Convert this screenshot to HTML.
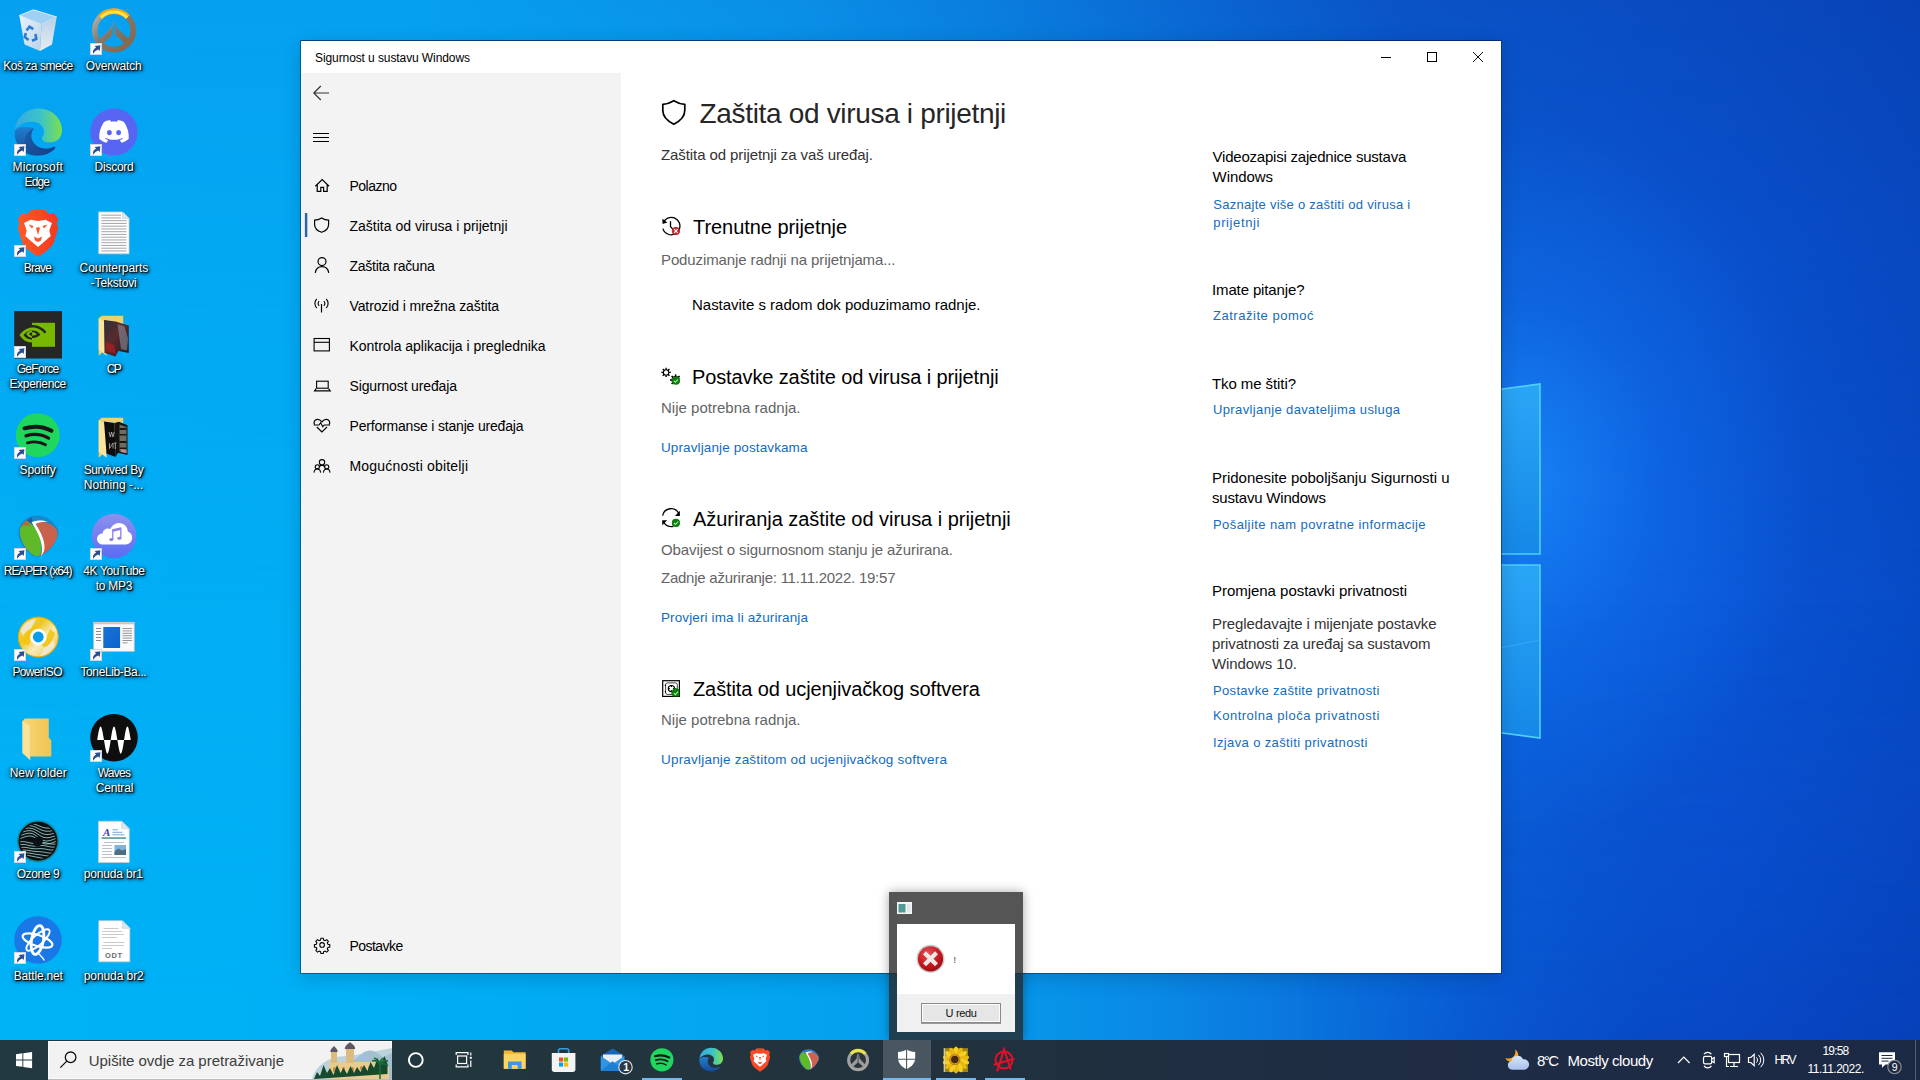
<!DOCTYPE html>
<html lang="hr">
<head>
<meta charset="utf-8">
<title>Sigurnost u sustavu Windows</title>
<style>
*{box-sizing:border-box;margin:0;padding:0}
html,body{width:1920px;height:1080px;overflow:hidden}
body{font-family:"Liberation Sans",sans-serif;position:relative;background:#0a5fd0;color:#000}
.abs{position:absolute}
svg{position:absolute;overflow:visible}
#wall{position:absolute;left:0;top:0;width:1920px;height:1080px;
 background:linear-gradient(90deg,#00b2f6 0,#00aff5 400px,#04a3f0 800px,#0698eb 1000px,#0a8ae5 1150px,#0a73dd 1320px,#0a60dc 1500px,#0a57da 1720px,#084dca 1920px)}
#wall2{position:absolute;left:0;top:0;width:1920px;height:1080px;
 background:linear-gradient(90deg,#06a0f1 0,#06a0f0 400px,#0a8ee6 800px,#0a7cdd 1000px,#0a66d2 1200px,#0a53c6 1400px,#0a4dc3 1600px,#0843b6 1920px);
 -webkit-mask-image:linear-gradient(180deg,#000 0,rgba(0,0,0,.5) 250px,rgba(0,0,0,.18) 600px,transparent 1000px);mask-image:linear-gradient(180deg,#000 0,rgba(0,0,0,.5) 250px,rgba(0,0,0,.18) 600px,transparent 1000px)}
#wall3{position:absolute;left:1000px;top:600px;width:920px;height:480px;background:linear-gradient(0deg,rgba(4,30,140,.3) 0,rgba(4,30,140,.16) 160px,rgba(4,30,140,0) 480px);-webkit-mask-image:linear-gradient(90deg,transparent 0,transparent 300px,#000 640px);mask-image:linear-gradient(90deg,transparent 0,transparent 300px,#000 640px)}
#glow{position:absolute;left:0;top:0;width:1920px;height:1080px;
 background:radial-gradient(ellipse 300px 360px at 1515px 480px, rgba(26,140,255,.8), rgba(24,130,255,.3) 50%, rgba(24,130,255,0) 100%)}
/* window */
#win{position:absolute;left:301px;top:41px;width:1200px;height:932px;background:#fff;
 box-shadow:0 0 0 1px rgba(0,40,90,.55),0 -1px 0 0 rgba(0,30,70,.5),0 4px 18px rgba(0,0,0,.18)}
#side{position:absolute;left:301px;top:73px;width:320px;height:900px;background:#f3f3f3}
.t{position:absolute;white-space:nowrap;line-height:1.2}
.lb{text-shadow:1px 1px 1px rgba(0,0,0,.95),1px 1px 3px rgba(0,0,0,.9),0 1px 4px rgba(0,0,0,.65),0 0 5px rgba(0,0,0,.35)}
/* desktop icons */
.ic{position:absolute;width:76px;text-align:center;color:#fff;font-size:12px;line-height:15px;
 text-shadow:1px 1px 1px rgba(0,0,0,.95),0 1px 3px rgba(0,0,0,.8),0 0 4px rgba(0,0,0,.55)}
.ic svg{left:14px;top:0}
.ic svg text{text-shadow:none}
/* taskbar */
#tb{position:absolute;left:0;top:1040px;width:1920px;height:40px;
 background:linear-gradient(90deg,#22383f 0,#22363e 500px,#23333d 800px,#21303e 1050px,#202e42 1200px,#1f2c44 1440px,#1c2945 1920px)}
</style>
</head>
<body>
<div id="wall"></div>
<div id="wall2"></div>
<div id="wall3"></div>
<div id="glow"></div>
<svg style="left:0;top:0" width="1920" height="1080" viewBox="0 0 1920 1080">
 <defs><linearGradient id="pn" x1="0" y1="0" x2="0" y2="1"><stop offset="0" stop-color="#2aa6f6"/><stop offset="1" stop-color="#1688e8"/></linearGradient></defs>
 <path d="M1480 392L1540 384V554H1480z" fill="url(#pn)"/>
 <path d="M1480 565H1540V738L1480 730z" fill="url(#pn)"/>
 <path d="M1480 392L1540 384V554H1480" fill="none" stroke="#4fd0f6" stroke-width="1.600"/>
 <path d="M1480 565H1540V738L1480 730" fill="none" stroke="#4fd0f6" stroke-width="1.600"/>
 <path d="M1480 652L1540 640" stroke="#3fb4f4" stroke-width="1" opacity=".6"/>
</svg>
<!-- DESKTOP ICONS -->
<div class="ic" style="left:0px;top:7px"><svg width="48" height="48" viewBox="0 0 48 48"><defs><linearGradient id="bl" x1="0" y1="0" x2="1" y2="1"><stop offset="0" stop-color="#e9f2fb"/><stop offset="1" stop-color="#bcd3e8"/></linearGradient><linearGradient id="br" x1="0" y1="0" x2="0" y2="1"><stop offset="0" stop-color="#b9d0e6"/><stop offset="1" stop-color="#e6edf4"/></linearGradient></defs>
<path d="M5.300 8.500L19.500 2.800 42.700 10 27.500 17.500z" fill="#9fd0f3" stroke="#d9ecfa" stroke-width="1"/>
<path d="M5.300 8.500L27.500 17.500 26 44 10.500 37.500z" fill="url(#bl)"/>
<path d="M27.500 17.500L42.700 10 38 37.500 26 44z" fill="url(#br)"/>
<g fill="none" stroke="#2b7ad1" stroke-width="2.600"><path d="M12.500 23.500l3-3.800 3.800 2.500"/><path d="M21.500 27l.8 5-4.300 1.700"/><path d="M14.500 33l-3.700-3 1-4"/></g></svg></div>
<div class="ic" style="left:76px;top:7px"><svg width="48" height="48" viewBox="0 0 48 48"><defs><linearGradient id="owg" x1="0" y1="0" x2="1" y2="1"><stop offset="0" stop-color="#b9b9b2"/><stop offset=".45" stop-color="#7f786c"/><stop offset="1" stop-color="#8a6547"/></linearGradient></defs>
<circle cx="24" cy="23.400" r="19.200" fill="none" stroke="url(#owg)" stroke-width="5.600"/>
<path d="M10.200 10A19.200 19.200 0 0 1 37.800 10" fill="none" stroke="#f0a81c" stroke-width="5.600"/>
<path d="M10.800 10.600A18.600 18.600 0 0 1 37.200 10.600" fill="none" stroke="#fbe444" stroke-width="3"/>
<path d="M22.800 11.300C22.600 17 21.500 20.500 18.500 23.500L9.300 32l3.400 5.300L22.800 27.500zM25.200 11.300C25.400 17 26.500 20.500 29.500 23.500L38.700 32l-3.400 5.300L25.200 27.500z" fill="url(#owg)"/><g transform="translate(0 36)"><rect x="0" y="0" width="12" height="12" fill="#fdfdfe"/><rect x=".5" y=".5" width="11" height="11" fill="none" stroke="#cfd6e2" stroke-width="1"/><path d="M3.200 10.800c-.8-2.800.4-5 2.900-6.300L4.600 3l5.800-.7-.7 5.800-1.500-1.500c-2 .7-3.500 2.200-5 4.200z" fill="#2a4f94"/></g></svg></div>
<div class="ic" style="left:0px;top:108px"><svg width="48" height="48" viewBox="0 0 48 48"><defs><linearGradient id="eg1" x1="0" y1="0" x2="1" y2="0"><stop offset="0" stop-color="#35a9e4"/><stop offset=".55" stop-color="#3cc3c8"/><stop offset="1" stop-color="#7ee04a"/></linearGradient><linearGradient id="eg2" x1="0" y1="0" x2="0" y2="1"><stop offset="0" stop-color="#1f7fd0"/><stop offset="1" stop-color="#154a96"/></linearGradient><linearGradient id="eg3" x1="0" y1="0" x2="1" y2="1"><stop offset="0" stop-color="#1a5fae"/><stop offset="1" stop-color="#153f86"/></linearGradient></defs>
<path d="M.8 22.500C2 9.500 12 .5 24.500.5 38 .5 48 10.500 48 22c0 8.500-6 12.500-12.500 12.500-5 0-7.500-2.200-7.500-4.300 0-2.200 2.200-2.700 2.200-6.200 0-5.200-5-10.200-12.200-10.200C9.500 13.800 2 19 .8 22.500z" fill="url(#eg1)"/>
<path d="M.8 22.500C-.5 32 5 42 14 46c9 3.500 20 1.500 26.500-5 1.500-1.800.6-3-1.200-2-5.500 3-13.300 2.500-18.300-2.500-4.800-4.800-4.800-11.500-1-16C13 18 5 18.500.8 22.500z" fill="url(#eg2)"/>
<path d="M20 20.500c-4 4.500-3.800 11.200 1 16 5 5 12.800 5.500 18.300 2.500 1.800-1 2.700.2 1.200 2-5 5-13.500 7.300-21 5.500C11.500 44 9 37 11 30c1.300-4.500 4.800-8.200 9-9.500z" fill="url(#eg3)"/><g transform="translate(0 36)"><rect x="0" y="0" width="12" height="12" fill="#fdfdfe"/><rect x=".5" y=".5" width="11" height="11" fill="none" stroke="#cfd6e2" stroke-width="1"/><path d="M3.200 10.800c-.8-2.800.4-5 2.900-6.300L4.600 3l5.800-.7-.7 5.800-1.500-1.500c-2 .7-3.500 2.200-5 4.200z" fill="#2a4f94"/></g></svg></div>
<div class="ic" style="left:76px;top:108px"><svg width="48" height="48" viewBox="0 0 48 48"><circle cx="24" cy="24" r="23.600" fill="#5865f2"/>
<path d="M14 14c3-1.400 5-1.700 6.300-1.700l.7 1.400c2-.3 4-.3 6 0l.7-1.400c1.300 0 3.300.3 6.300 1.700 3.500 5 5.300 11 4.700 17-2.200 2-5.200 3.300-7.200 3.800l-1.700-2.800c1.200-.4 2.200-.9 3.200-1.600l-.6-.5c-5.400 2.500-11.400 2.500-16.800 0l-.6.500c1 .7 2 1.200 3.200 1.600l-1.700 2.800c-2-.5-5-1.800-7.200-3.800-.6-6 1.200-12 4.700-17z" fill="#fff"/>
<ellipse cx="19.400" cy="24.600" rx="2.400" ry="2.700" fill="#5865f2"/><ellipse cx="28.600" cy="24.600" rx="2.400" ry="2.700" fill="#5865f2"/><g transform="translate(0 36)"><rect x="0" y="0" width="12" height="12" fill="#fdfdfe"/><rect x=".5" y=".5" width="11" height="11" fill="none" stroke="#cfd6e2" stroke-width="1"/><path d="M3.200 10.800c-.8-2.800.4-5 2.900-6.300L4.600 3l5.800-.7-.7 5.800-1.500-1.500c-2 .7-3.500 2.200-5 4.200z" fill="#2a4f94"/></g></svg></div>
<div class="ic" style="left:0px;top:209px"><svg width="48" height="48" viewBox="0 0 48 48"><defs><linearGradient id="brg" x1="0" y1="0" x2="1" y2="0"><stop offset="0" stop-color="#ff5a26"/><stop offset="1" stop-color="#f4381f"/></linearGradient></defs>
<path d="M24 .8l7.200.4 3.800 4 5-.8 4.200 5.600-1.600 4 1.600 5L40 33c-2 5-7 9-16 14.800C15 42 10 38 8 33L3.800 19l1.600-5-1.600-4L8 4.400l5 .8 3.800-4z" fill="url(#brg)"/>
<path d="M10 14l6.500-3.300L24 12l7.500-1.300L38 14l-2.700 7.500 1.400 5.500-6.200 5.500L24 38l-6.500-5.500-6.200-5.500 1.400-5.500z" fill="#fff"/>
<path d="M14.500 15.500l5 1.500-1.500 2.500zM33.500 15.500l-5 1.500 1.500 2.500zM20 27.500l4 2 4-2-1 4-3 1.500-3-1.500zM22 19l2 7 2-7-2-1z" fill="#fb542b"/><g transform="translate(0 36)"><rect x="0" y="0" width="12" height="12" fill="#fdfdfe"/><rect x=".5" y=".5" width="11" height="11" fill="none" stroke="#cfd6e2" stroke-width="1"/><path d="M3.200 10.800c-.8-2.800.4-5 2.900-6.300L4.600 3l5.800-.7-.7 5.800-1.500-1.500c-2 .7-3.500 2.200-5 4.200z" fill="#2a4f94"/></g></svg></div>
<div class="ic" style="left:76px;top:209px"><svg width="48" height="48" viewBox="0 0 48 48"><path d="M8.7 3H32.5L39 9.5V44.8H8.7z" fill="#fff" stroke="#c9cfd6" stroke-width=".8"/>
<path d="M32.5 3V9.5H39z" fill="#dfe7f2" stroke="#c9cfd6" stroke-width=".7"/><path d="M11.300 6.20H31" stroke="#9a9aa0" stroke-width=".9"/><path d="M11.300 8.95H31" stroke="#9a9aa0" stroke-width=".9"/><path d="M11.300 11.70H36.5" stroke="#9a9aa0" stroke-width=".9"/><path d="M11.300 14.45H36.5" stroke="#9a9aa0" stroke-width=".9"/><path d="M11.300 17.20H36.5" stroke="#9a9aa0" stroke-width=".9"/><path d="M11.300 19.95H36.5" stroke="#9a9aa0" stroke-width=".9"/><path d="M11.300 22.70H36.5" stroke="#9a9aa0" stroke-width=".9"/><path d="M11.300 25.45H36.5" stroke="#9a9aa0" stroke-width=".9"/><path d="M11.300 28.20H36.5" stroke="#9a9aa0" stroke-width=".9"/><path d="M11.300 30.95H36.5" stroke="#9a9aa0" stroke-width=".9"/><path d="M11.300 33.70H36.5" stroke="#9a9aa0" stroke-width=".9"/><path d="M11.300 36.45H36.5" stroke="#9a9aa0" stroke-width=".9"/><path d="M11.300 39.20H36.5" stroke="#9a9aa0" stroke-width=".9"/><path d="M11.300 41.95H36.5" stroke="#9a9aa0" stroke-width=".9"/></svg></div>
<div class="ic" style="left:0px;top:310px"><svg width="48" height="48" viewBox="0 0 48 48"><rect x=".2" y="1" width="47.800" height="47.500" fill="#262626"/>
<rect x="18" y="12.800" width="23" height="24" fill="#77b900"/>
<path d="M18 17.500c-6 .5-10 4-12.500 7.500 2.500 4.500 7 7.500 12.500 7.500 4.500 0 9-2 12.500-5l-2.500-1.800c-3 2.500-6 4-10 4-3.500 0-6.500-1.800-8.500-4.700 2-2.500 5-4.500 8.500-4.800z" fill="#77b900"/>
<path d="M18 20.500c3.500-.2 6.500 1.500 8.500 4-2 2.300-5 3.800-8.500 3.600v-2.500c2 .1 3.500-.4 4.800-1.400-1.300-1.300-2.800-2-4.800-1.800z" fill="#262626"/>
<path d="M18 20.300c-2.500.3-4.500 1.700-5.800 3.700 1.300 2.200 3.300 3.600 5.800 3.800v-2c-1.300-.2-2.300-.9-3-1.900.7-1 1.700-1.500 3-1.700z" fill="#77b900"/>
<path d="M18 15c5.500-.3 11 2.500 14.500 7l-2 1.600c-3-3.800-7.500-6.300-12.500-6z" fill="#262626"/><g transform="translate(0 36)"><rect x="0" y="0" width="12" height="12" fill="#fdfdfe"/><rect x=".5" y=".5" width="11" height="11" fill="none" stroke="#cfd6e2" stroke-width="1"/><path d="M3.200 10.800c-.8-2.800.4-5 2.900-6.300L4.600 3l5.800-.7-.7 5.800-1.500-1.500c-2 .7-3.500 2.200-5 4.200z" fill="#2a4f94"/></g></svg></div>
<div class="ic" style="left:76px;top:310px"><svg width="48" height="48" viewBox="0 0 48 48"><defs><linearGradient id="cpg" x1="0" y1="0" x2="1" y2="1"><stop offset="0" stop-color="#2b2f3a"/><stop offset=".45" stop-color="#5a2a2c"/><stop offset="1" stop-color="#1b1c22"/></linearGradient></defs>
<path d="M8.700 8.200l3-2.500h21.500v33H16.500l-7.800 7z" fill="#f2cf6e"/>
<path d="M8.700 8.200l7.800 4.500v33l-7.800-6.200z" fill="#fbe3a0"/>
<path d="M14 10l11.500 1.500 13.300 4V43l-10.500-2-2.800 5.500L14.500 43z" fill="url(#cpg)"/>
<path d="M27.500 14l7 2.500 3.500 12-1 12-6-1.500z" fill="#8e98a8" opacity=".55"/>
<path d="M16 32l8 3 2 9-9.500-3z" fill="#a11f22" opacity=".85"/></svg></div>
<div class="ic" style="left:0px;top:411px"><svg width="48" height="48" viewBox="0 0 48 48"><circle cx="23.800" cy="24.200" r="22" fill="#1fd65f"/>
<g fill="none" stroke="#161616" stroke-linecap="round"><path d="M10.500 17.300c9-2.600 19-1.800 27 2.500" stroke-width="4"/><path d="M12 24.800c7.500-2.200 16-1.400 22.500 2.300" stroke-width="3.300"/><path d="M13.500 31.800c6.300-1.700 12.800-1.100 18 1.900" stroke-width="2.800"/></g><g transform="translate(0 36)"><rect x="0" y="0" width="12" height="12" fill="#fdfdfe"/><rect x=".5" y=".5" width="11" height="11" fill="none" stroke="#cfd6e2" stroke-width="1"/><path d="M3.200 10.800c-.8-2.800.4-5 2.900-6.300L4.600 3l5.800-.7-.7 5.800-1.500-1.500c-2 .7-3.500 2.200-5 4.200z" fill="#2a4f94"/></g></svg></div>
<div class="ic" style="left:76px;top:411px"><svg width="48" height="48" viewBox="0 0 48 48"><path d="M8.700 9.200l3-2.500h21.500v33H16.500l-7.800 7z" fill="#f2cf6e"/>
<path d="M8.700 9.200l7.800 4.500v33l-7.800-6.200z" fill="#fbe3a0"/>
<path d="M14 10.500l10.500 1.500 1 34-9-3.500z" fill="#0d0d0d"/>
<path d="M24.500 12l4.500-1.200 8.500 3.500V44l-9.500-2.300-2.500 4.300z" fill="#15130f"/>
<path d="M29.500 13.500l7 2.600v26l-7-1.600z" fill="#6f6a62"/>
<path d="M29.500 17h7v2h-7zM29.500 23h7v1.600h-7zM29.500 30h7v2h-7zM29.500 36.500h7v1.600h-7z" fill="#1b1712"/>
<path d="M31 38l5.500 1.200v3l-5.500-1.200z" fill="#b98a86"/>
<g fill="none" stroke="#cfcfcf" stroke-width=".7"><path d="M19 21l1.300 5 1.300-5 1.300 5 1.300-5M19.500 32v5.500l3.500-5.500v5.500M24 32h2.500M25.300 32v6"/></g></svg></div>
<div class="ic" style="left:0px;top:512px"><svg width="48" height="48" viewBox="0 0 48 48"><defs><linearGradient id="rpg" x1="0" y1="0" x2="0" y2="1"><stop offset="0" stop-color="#c46450"/><stop offset="1" stop-color="#d25c44"/></linearGradient></defs>
<path d="M4.500 22C4 12 12 3.500 23 3.500c9 0 16.500 5 21 14 1 3 .5 6-1 9C38 37 31 43 25 44.500c-3 .8-6 0-8.500-2.500C9.500 36 5 29 4.500 22z" fill="#2c6aa4" opacity=".55"/>
<path d="M12 9.500c2-1.800 3.500-3 5.500-4.200l2 7.200z" fill="#2659a8"/>
<path d="M6 17c1.500-3.500 3.500-6 6.500-8.500L21 15c3 7 6.500 13 6.500 21 0 3-1 6-2.500 8-3 .500-6-.5-8.500-3C10 35 5 26 6 17z" fill="#5fba2a"/>
<path d="M7 14.500c1.500-2.500 3-4.300 5.200-6l4.800 5.500c-3.500-.8-7-.5-10 .5z" fill="#b46a3a"/>
<path d="M19 11c7-2.500 16-1 22 4.500 3 3.500 3 8 1 12C38 36 31 42 25.500 44c2-3 3-6 2.500-10-1-8-5-15-9-23z" fill="url(#rpg)"/>
<path d="M17.500 10c5-2 12-2.300 17.500 0-5-.5-10 .2-13.500 2 4 6 8.500 14 9 22 .2 4-1 7.500-3.500 10 1-3 1.300-6.500.8-10-1-8-5.500-16-10.300-24z" fill="#fff"/><g transform="translate(0 36)"><rect x="0" y="0" width="12" height="12" fill="#fdfdfe"/><rect x=".5" y=".5" width="11" height="11" fill="none" stroke="#cfd6e2" stroke-width="1"/><path d="M3.200 10.800c-.8-2.800.4-5 2.900-6.300L4.600 3l5.800-.7-.7 5.800-1.500-1.500c-2 .7-3.500 2.200-5 4.200z" fill="#2a4f94"/></g></svg></div>
<div class="ic" style="left:76px;top:512px"><svg width="48" height="48" viewBox="0 0 48 48"><defs><linearGradient id="ytg" x1="0" y1="0" x2="0" y2="1"><stop offset="0" stop-color="#8e90ee"/><stop offset="1" stop-color="#5b6cf3"/></linearGradient></defs>
<circle cx="24" cy="24" r="22.300" fill="url(#ytg)"/>
<path d="M13 32.500c-3.600 0-6-2.500-6-5.500 0-3.200 2.600-5.500 5.600-5.400.3-3 2.700-5 5.400-5 .8 0 1.600.2 2.300.5C22 13.500 25.200 11 29 11c5 0 8.700 3.800 8.800 8.500 2.600.8 4.400 3.200 4.400 6 0 3.800-3 7-6.700 7z" fill="#fff"/>
<g fill="#8f7ee6"><ellipse cx="21.300" cy="27.600" rx="2" ry="1.500"/><ellipse cx="29.300" cy="26.200" rx="2" ry="1.500"/></g><path d="M22.800 27.600V17.800l8-1.700v10" fill="none" stroke="#8f7ee6" stroke-width="1.300"/><path d="M22.800 17.800l8-1.700v2l-8 1.700z" fill="#8f7ee6"/><g transform="translate(0 36)"><rect x="0" y="0" width="12" height="12" fill="#fdfdfe"/><rect x=".5" y=".5" width="11" height="11" fill="none" stroke="#cfd6e2" stroke-width="1"/><path d="M3.200 10.800c-.8-2.800.4-5 2.900-6.300L4.600 3l5.800-.7-.7 5.800-1.500-1.500c-2 .7-3.500 2.200-5 4.200z" fill="#2a4f94"/></g></svg></div>
<div class="ic" style="left:0px;top:613px"><svg width="48" height="48" viewBox="0 0 48 48"><defs><linearGradient id="pig" x1="0" y1="0" x2="1" y2="1"><stop offset="0" stop-color="#f7e27a"/><stop offset=".35" stop-color="#f0c419"/><stop offset=".6" stop-color="#f8ecc0"/><stop offset="1" stop-color="#e8b90f"/></linearGradient></defs>
<circle cx="24.300" cy="24" r="20" fill="url(#pig)" stroke="#d9a80e" stroke-width="1"/>
<path d="M9 31c2-9 6-15 12-18l4 4c-4 2-8 8-10 15zM27 31c3-2 7-9 9-15l5 4c-2 7-6 13-10 15z" fill="#f2c40f" opacity=".9"/>
<path d="M6.500 18c3-7 9-11.500 16-12l-6 10c-3 1-6 4-7.500 7zM41 32c-3 6-9 10-15 11l5-9c3-1 6-4 8-7z" fill="#efe9dc" opacity=".9"/>
<circle cx="24.300" cy="24" r="8.300" fill="#fff"/><circle cx="24.300" cy="24" r="5.400" fill="#0a9de9"/><g transform="translate(0 36)"><rect x="0" y="0" width="12" height="12" fill="#fdfdfe"/><rect x=".5" y=".5" width="11" height="11" fill="none" stroke="#cfd6e2" stroke-width="1"/><path d="M3.200 10.800c-.8-2.800.4-5 2.900-6.300L4.600 3l5.800-.7-.7 5.800-1.500-1.500c-2 .7-3.500 2.200-5 4.200z" fill="#2a4f94"/></g></svg></div>
<div class="ic" style="left:76px;top:613px"><svg width="48" height="48" viewBox="0 0 48 48"><rect x="3.700" y="9.300" width="40.500" height="29" fill="#fafafa" stroke="#d5c7bd" stroke-width=".8"/>
<rect x="3.700" y="9.300" width="40.500" height="2" fill="#cfc6c0"/>
<defs><linearGradient id="tlg" x1="0" y1="0" x2="1" y2="1"><stop offset="0" stop-color="#1a73d8"/><stop offset="1" stop-color="#0b62cc"/></linearGradient></defs>
<rect x="13.300" y="14" width="16.800" height="21" fill="url(#tlg)"/><path d="M6 15.5h5" stroke="#8b8b8b" stroke-width="1"/><path d="M6 18.5h5" stroke="#8b8b8b" stroke-width="1"/><path d="M6 21.5h5" stroke="#8b8b8b" stroke-width="1"/><path d="M6 24.5h5" stroke="#8b8b8b" stroke-width="1"/><path d="M6 27.5h5" stroke="#8b8b8b" stroke-width="1"/><path d="M32.500 15.5h9.5" stroke="#8b8b8b" stroke-width=".9"/><path d="M32.500 17.9h9.5" stroke="#8b8b8b" stroke-width=".9"/><path d="M32.500 20.3h9.5" stroke="#8b8b8b" stroke-width=".9"/><path d="M32.500 22.7h9.5" stroke="#8b8b8b" stroke-width=".9"/><path d="M32.500 25.1h9.5" stroke="#8b8b8b" stroke-width=".9"/><path d="M32.500 27.5h9.5" stroke="#8b8b8b" stroke-width=".9"/><path d="M32.500 29.9h5" stroke="#8b8b8b" stroke-width=".9"/><g transform="translate(0 36)"><rect x="0" y="0" width="12" height="12" fill="#fdfdfe"/><rect x=".5" y=".5" width="11" height="11" fill="none" stroke="#cfd6e2" stroke-width="1"/><path d="M3.200 10.800c-.8-2.800.4-5 2.900-6.300L4.600 3l5.800-.7-.7 5.800-1.500-1.500c-2 .7-3.500 2.200-5 4.200z" fill="#2a4f94"/></g></svg></div>
<div class="ic" style="left:0px;top:714px"><svg width="48" height="48" viewBox="0 0 48 48"><defs><linearGradient id="fdg" x1="0" y1="0" x2="1" y2="0"><stop offset="0" stop-color="#f7d675"/><stop offset="1" stop-color="#f0c552"/></linearGradient></defs>
<path d="M8.300 7.500l2.500-3h24v19l2.500 3v16H16z" fill="url(#fdg)"/>
<path d="M8.300 7.500l7.700 4.300V46l-7.700-7z" fill="#fbe29a"/>
<path d="M16 11.800V46" stroke="#f5d77f" stroke-width=".6"/></svg></div>
<div class="ic" style="left:76px;top:714px"><svg width="48" height="48" viewBox="0 0 48 48"><circle cx="24" cy="23.700" r="23.800" fill="#0e0e0e"/>
<path d="M7.200 26C8.600 17 9.600 12.400 10.600 12.400S12.600 17 14 26C15.400 35 16.400 39.700 17.400 39.700S19.400 35 20.700 26C22 17 23 12.400 24 12.400S26 17 27.400 26C28.800 35 29.800 39.700 30.800 39.700S32.800 35 34.100 26C35.400 17 36.400 12.400 37.400 12.400S39.400 17 40.800 26z" fill="#fff"/><g transform="translate(0 36)"><rect x="0" y="0" width="12" height="12" fill="#fdfdfe"/><rect x=".5" y=".5" width="11" height="11" fill="none" stroke="#cfd6e2" stroke-width="1"/><path d="M3.200 10.800c-.8-2.800.4-5 2.900-6.300L4.600 3l5.800-.7-.7 5.800-1.500-1.500c-2 .7-3.500 2.200-5 4.200z" fill="#2a4f94"/></g></svg></div>
<div class="ic" style="left:0px;top:815px"><svg width="48" height="48" viewBox="0 0 48 48"><defs><clipPath id="ozc"><circle cx="24" cy="26.300" r="17.800"/></clipPath></defs><circle cx="24" cy="26.300" r="20.300" fill="#0a1013" stroke="#138fa3" stroke-width="1.600"/><g clip-path="url(#ozc)"><path d="M4.0 9.9L5.0 9.6L6.0 9.3L7.0 9.0L8.0 8.7L9.0 8.5L10.0 8.3L11.0 8.1L12.0 8.0L13.0 7.9L14.0 7.9L15.0 7.9L16.0 8.0L17.0 8.2L18.0 8.4L19.0 8.6L20.0 8.9L21.0 9.3L22.0 9.7L23.0 10.1L24.0 10.5L25.0 10.9L26.0 11.3L27.0 11.7L28.0 12.1L29.0 12.4L30.0 12.6L31.0 12.8L32.0 13.0L33.0 13.1L34.0 13.1L35.0 13.1L36.0 13.0L37.0 12.9L38.0 12.7L39.0 12.5L40.0 12.3L41.0 12.0L42.0 11.7L43.0 11.4L44.0 11.1" fill="none" stroke="#a9dcd4" stroke-width=".8"/><path d="M4.0 12.8L5.0 12.5L6.0 12.1L7.0 11.9L8.0 11.6L9.0 11.3L10.0 11.1L11.0 10.9L12.0 10.7L13.0 10.6L14.0 10.6L15.0 10.6L16.0 10.6L17.0 10.8L18.0 11.0L19.0 11.2L20.0 11.6L21.0 12.0L22.0 12.4L23.0 12.9L24.0 13.4L25.0 13.9L26.0 14.4L27.0 14.8L28.0 15.2L29.0 15.6L30.0 15.8L31.0 16.0L32.0 16.2L33.0 16.2L34.0 16.2L35.0 16.2L36.0 16.1L37.0 15.9L38.0 15.7L39.0 15.5L40.0 15.2L41.0 14.9L42.0 14.7L43.0 14.3L44.0 14.0" fill="none" stroke="#a9dcd4" stroke-width=".8"/><path d="M4.0 15.7L5.0 15.3L6.0 15.0L7.0 14.7L8.0 14.4L9.0 14.1L10.0 13.8L11.0 13.6L12.0 13.4L13.0 13.2L14.0 13.1L15.0 13.1L16.0 13.2L17.0 13.3L18.0 13.5L19.0 13.8L20.0 14.2L21.0 14.6L22.0 15.2L23.0 15.7L24.0 16.3L25.0 16.9L26.0 17.4L27.0 18.0L28.0 18.4L29.0 18.8L30.0 19.1L31.0 19.3L32.0 19.4L33.0 19.5L34.0 19.5L35.0 19.4L36.0 19.2L37.0 19.0L38.0 18.8L39.0 18.5L40.0 18.2L41.0 17.9L42.0 17.6L43.0 17.3L44.0 16.9" fill="none" stroke="#a9dcd4" stroke-width=".8"/><path d="M4.0 18.6L5.0 18.2L6.0 17.9L7.0 17.5L8.0 17.2L9.0 16.9L10.0 16.6L11.0 16.3L12.0 16.0L13.0 15.8L14.0 15.7L15.0 15.6L16.0 15.7L17.0 15.8L18.0 16.0L19.0 16.3L20.0 16.8L21.0 17.3L22.0 17.9L23.0 18.5L24.0 19.2L25.0 19.9L26.0 20.5L27.0 21.1L28.0 21.6L29.0 22.1L30.0 22.4L31.0 22.6L32.0 22.7L33.0 22.8L34.0 22.7L35.0 22.6L36.0 22.4L37.0 22.1L38.0 21.8L39.0 21.5L40.0 21.2L41.0 20.9L42.0 20.5L43.0 20.2L44.0 19.8" fill="none" stroke="#a9dcd4" stroke-width=".8"/><path d="M4.0 21.5L5.0 21.1L6.0 20.8L7.0 20.4L8.0 20.0L9.0 19.7L10.0 19.3L11.0 19.0L12.0 18.7L13.0 18.5L14.0 18.3L15.0 18.2L16.0 18.2L17.0 18.3L18.0 18.6L19.0 18.9L20.0 19.4L21.0 20.0L22.0 20.6L23.0 21.3L24.0 22.1L25.0 22.9L26.0 23.6L27.0 24.2L28.0 24.8L29.0 25.3L30.0 25.6L31.0 25.9L32.0 26.0L33.0 26.0L34.0 25.9L35.0 25.7L36.0 25.5L37.0 25.2L38.0 24.9L39.0 24.5L40.0 24.2L41.0 23.8L42.0 23.4L43.0 23.1L44.0 22.7" fill="none" stroke="#a9dcd4" stroke-width=".8"/><path d="M4.0 24.4L5.0 24.0L6.0 23.6L7.0 23.3L8.0 22.9L9.0 22.5L10.0 22.2L11.0 21.8L12.0 21.5L13.0 21.3L14.0 21.1L15.0 21.0L16.0 21.0L17.0 21.1L18.0 21.3L19.0 21.7L20.0 22.1L21.0 22.7L22.0 23.4L23.0 24.2L24.0 25.0L25.0 25.8L26.0 26.6L27.0 27.3L28.0 27.9L29.0 28.3L30.0 28.7L31.0 28.9L32.0 29.0L33.0 29.0L34.0 28.9L35.0 28.7L36.0 28.5L37.0 28.2L38.0 27.8L39.0 27.5L40.0 27.1L41.0 26.7L42.0 26.4L43.0 26.0L44.0 25.6" fill="none" stroke="#a9dcd4" stroke-width=".8"/><path d="M4.0 27.3L5.0 27.1L6.0 26.9L7.0 26.7L8.0 26.7L9.0 26.7L10.0 26.7L11.0 26.8L12.0 27.0L13.0 27.2L14.0 27.5L15.0 27.7L16.0 27.9L17.0 28.1L18.0 28.3L19.0 28.3L20.0 28.4L21.0 28.3L22.0 28.2L23.0 28.1L24.0 27.9L25.0 27.7L26.0 27.6L27.0 27.5L28.0 27.4L29.0 27.5L30.0 27.5L31.0 27.7L32.0 27.9L33.0 28.1L34.0 28.3L35.0 28.6L36.0 28.8L37.0 29.0L38.0 29.1L39.0 29.1L40.0 29.1L41.0 29.1L42.0 28.9L43.0 28.7L44.0 28.5" fill="none" stroke="#a9dcd4" stroke-width=".8"/><path d="M4.0 30.2L5.0 30.0L6.0 29.8L7.0 29.6L8.0 29.5L9.0 29.5L10.0 29.5L11.0 29.6L12.0 29.8L13.0 30.0L14.0 30.2L15.0 30.4L16.0 30.6L17.0 30.8L18.0 31.0L19.0 31.1L20.0 31.1L21.0 31.1L22.0 31.0L23.0 30.9L24.0 30.8L25.0 30.7L26.0 30.6L27.0 30.5L28.0 30.5L29.0 30.5L30.0 30.6L31.0 30.8L32.0 31.0L33.0 31.2L34.0 31.4L35.0 31.6L36.0 31.8L37.0 32.0L38.0 32.1L39.0 32.1L40.0 32.1L41.0 32.0L42.0 31.8L43.0 31.6L44.0 31.4" fill="none" stroke="#a9dcd4" stroke-width=".8"/><path d="M4.0 33.1L5.0 32.8L6.0 32.6L7.0 32.5L8.0 32.4L9.0 32.3L10.0 32.3L11.0 32.4L12.0 32.5L13.0 32.6L14.0 32.8L15.0 33.0L16.0 33.2L17.0 33.4L18.0 33.5L19.0 33.6L20.0 33.7L21.0 33.8L22.0 33.8L23.0 33.7L24.0 33.7L25.0 33.7L26.0 33.6L27.0 33.6L28.0 33.7L29.0 33.8L30.0 33.9L31.0 34.0L32.0 34.2L33.0 34.4L34.0 34.6L35.0 34.8L36.0 34.9L37.0 35.0L38.0 35.1L39.0 35.1L40.0 35.0L41.0 34.9L42.0 34.8L43.0 34.6L44.0 34.3" fill="none" stroke="#a9dcd4" stroke-width=".8"/><path d="M4.0 36.0L5.0 35.7L6.0 35.5L7.0 35.3L8.0 35.2L9.0 35.1L10.0 35.0L11.0 35.1L12.0 35.1L13.0 35.2L14.0 35.4L15.0 35.5L16.0 35.7L17.0 35.9L18.0 36.0L19.0 36.2L20.0 36.3L21.0 36.4L22.0 36.5L23.0 36.5L24.0 36.6L25.0 36.7L26.0 36.7L27.0 36.8L28.0 36.9L29.0 37.0L30.0 37.2L31.0 37.3L32.0 37.5L33.0 37.7L34.0 37.8L35.0 38.0L36.0 38.1L37.0 38.1L38.0 38.2L39.0 38.1L40.0 38.0L41.0 37.9L42.0 37.7L43.0 37.5L44.0 37.2" fill="none" stroke="#a9dcd4" stroke-width=".8"/><path d="M4.0 38.9L5.0 38.6L6.0 38.4L7.0 38.2L8.0 38.0L9.0 37.9L10.0 37.8L11.0 37.8L12.0 37.8L13.0 37.9L14.0 38.0L15.0 38.1L16.0 38.2L17.0 38.4L18.0 38.6L19.0 38.7L20.0 38.9L21.0 39.1L22.0 39.2L23.0 39.4L24.0 39.5L25.0 39.6L26.0 39.8L27.0 39.9L28.0 40.1L29.0 40.3L30.0 40.4L31.0 40.6L32.0 40.8L33.0 40.9L34.0 41.0L35.0 41.1L36.0 41.2L37.0 41.2L38.0 41.2L39.0 41.1L40.0 41.0L41.0 40.8L42.0 40.6L43.0 40.4L44.0 40.1" fill="none" stroke="#a9dcd4" stroke-width=".8"/><path d="M4.0 41.8L5.0 41.5L6.0 41.2L7.0 41.0L8.0 40.8L9.0 40.7L10.0 40.6L11.0 40.5L12.0 40.5L13.0 40.5L14.0 40.6L15.0 40.7L16.0 40.8L17.0 41.0L18.0 41.2L19.0 41.4L20.0 41.6L21.0 41.8L22.0 42.0L23.0 42.2L24.0 42.4L25.0 42.6L26.0 42.8L27.0 43.0L28.0 43.2L29.0 43.4L30.0 43.6L31.0 43.8L32.0 44.0L33.0 44.1L34.0 44.2L35.0 44.3L36.0 44.3L37.0 44.3L38.0 44.2L39.0 44.1L40.0 44.0L41.0 43.8L42.0 43.6L43.0 43.3L44.0 43.0" fill="none" stroke="#a9dcd4" stroke-width=".8"/></g><ellipse cx="24" cy="26.500" rx="4.600" ry="5.500" fill="#0a1013" transform="rotate(35 24 26.500)"/><g transform="translate(0 36)"><rect x="0" y="0" width="12" height="12" fill="#fdfdfe"/><rect x=".5" y=".5" width="11" height="11" fill="none" stroke="#cfd6e2" stroke-width="1"/><path d="M3.200 10.800c-.8-2.800.4-5 2.900-6.300L4.600 3l5.800-.7-.7 5.800-1.500-1.500c-2 .7-3.500 2.200-5 4.200z" fill="#2a4f94"/></g></svg></div>
<div class="ic" style="left:76px;top:815px"><svg width="48" height="48" viewBox="0 0 48 48"><path d="M8.5 6.3H31.700000000000003L39.2 13.8V47.5H8.5z" fill="#fff" stroke="#c9cfd6" stroke-width=".8"/>
<path d="M31.700000000000003 6.3V13.8H39.2z" fill="#dfe7f2" stroke="#c9cfd6" stroke-width=".7"/><text x="13" y="21" font-family="Liberation Serif,serif" font-style="italic" font-weight="bold" font-size="11" fill="#3d45b3">A</text>
<path d="M22.500 14.800h5.500M22.500 17.300h10M22.500 19.800h12" stroke="#6a9ad6" stroke-width=".9"/>
<rect x="11.500" y="22.300" width="24.500" height="1.500" fill="#4e8f8a"/>
<path d="M14 27.500h20M12 30.500h10M12 33.500h10M12 36.500h10M12 39.500h10M12 42.500h24" stroke="#aab2bf" stroke-width=".8"/>
<rect x="24.500" y="30" width="11.500" height="10" fill="#7fb2dc"/><path d="M24.500 36.500l4-3 3.500 2 4-1.500v6h-11.500z" fill="#4d6f7d"/></svg></div>
<div class="ic" style="left:0px;top:916px"><svg width="48" height="48" viewBox="0 0 48 48"><circle cx="24" cy="24" r="23.800" fill="#1a78e6"/>
<g fill="none" stroke="#fff"><ellipse cx="23.500" cy="24" rx="6" ry="14.500" transform="rotate(10 23.500 24)" stroke-width="2.800"/><ellipse cx="23.500" cy="24.500" rx="5.500" ry="15.500" transform="rotate(-72 23.500 24.500)" stroke-width="2.200"/><ellipse cx="24" cy="24" rx="5" ry="15" transform="rotate(48 24 24)" stroke-width="1.900"/></g><path d="M23 36c2.500 2.500 5 4.500 7.500 8.500" stroke="#fff" stroke-width="1.400" fill="none"/><g transform="translate(0 36)"><rect x="0" y="0" width="12" height="12" fill="#fdfdfe"/><rect x=".5" y=".5" width="11" height="11" fill="none" stroke="#cfd6e2" stroke-width="1"/><path d="M3.200 10.800c-.8-2.800.4-5 2.900-6.300L4.600 3l5.800-.7-.7 5.800-1.500-1.500c-2 .7-3.500 2.200-5 4.200z" fill="#2a4f94"/></g></svg></div>
<div class="ic" style="left:76px;top:916px"><svg width="48" height="48" viewBox="0 0 48 48"><path d="M8.8 4.8H32.3L39.8 12.3V45.8H8.8z" fill="#fff" stroke="#c9cfd6" stroke-width=".8"/>
<path d="M32.3 4.8V12.3H39.8z" fill="#dfe7f2" stroke="#c9cfd6" stroke-width=".7"/><path d="M13.500 12.500h15M12 15.500h20M12 18.500h22M12 21.500h15M13.500 26.500h21M12 29.500h22M12 32.500h10" stroke="#c4c4c4" stroke-width=".9"/>
<text x="15" y="42" font-family="Liberation Sans,sans-serif" font-weight="bold" font-size="7.500" letter-spacing=".6" fill="#6a6a6a">ODT</text></svg></div>
<!-- WINDOW -->
<div id="win"></div>
<div id="side"></div>
<svg style="left:0;top:0" width="1920" height="1080" viewBox="0 0 1920 1080" fill="none" stroke="#000" stroke-width="1.1" stroke-linecap="butt" stroke-linejoin="miter">
 <rect x="304.9" y="213" width="2.4" height="24" fill="#2465ae" stroke="none"/>
 <!-- caption buttons -->
 <path d="M1381 57.5h10" stroke-width="1"/>
 <rect x="1427.5" y="52.5" width="9" height="9" stroke-width="1"/>
 <path d="M1473 52l10 10M1483 52l-10 10" stroke-width=".95"/>
 <!-- back + hamburger -->
 <path d="M329 93H314M320.8 86l-7 7 7 7" stroke="#333" stroke-width="1.2"/>
 <path d="M313 133.5h16M313 137.5h16M313 141.5h16" stroke-width="1"/>
 <!-- home -->
 <path d="M315.3 186.2l6.9-6.6 6.9 6.6M317.2 184.8v6.5h3.6v-4h2.8v4h3.6v-6.5" stroke-width="1.2"/>
 <!-- shield small -->
 <path d="M321.6 217.9c-2.3 1.5-4.4 2.2-7 2.3v4.3c0 4.200 3 6.500 7 7.800 4-1.300 7-3.600 7-7.800v-4.300c-2.600-.1-4.700-.8-7-2.300z" stroke-width="1.2"/>
 <!-- person -->
 <circle cx="322" cy="261.600" r="4" stroke-width="1.2"/>
 <path d="M315.300 272.800c.5-3.800 3.200-6.200 6.700-6.200s6.200 2.400 6.700 6.200" stroke-width="1.200"/>
 <!-- antenna -->
 <path d="M321.500 304v8.500" stroke-width="1.200"/>
 <path d="M319.200 301.200a3 3 0 0 0 0 4.600M323.800 301.200a3 3 0 0 1 0 4.600M316.800 299a6.300 6.300 0 0 0 0 9M326.200 299a6.300 6.300 0 0 1 0 9" stroke-width="1.100"/>
 <!-- app window -->
 <rect x="314.100" y="338.500" width="15.300" height="12.400" stroke-width="1.100"/>
 <path d="M314 342.300h15.500" stroke-width="1.100"/>
 <!-- laptop -->
 <rect x="316.6" y="381.2" width="11.6" height="7" stroke-width="1.1"/>
 <path d="M316.2 388.6l-1.700 2.300h15.800l-1.700-2.300" stroke-width="1.100"/>
 <!-- heart -->
 <path d="M314.600 424.800c-1.200-2.200-.3-5.200 2.600-5.500 1.900-.2 3.400.9 4.700 2.600 1.300-1.700 2.800-2.800 4.700-2.600 2.900.3 3.800 3.300 2.600 5.500M316.800 427l5.100 4.900 5.100-4.900" stroke-width="1.200"/>
 <path d="M313.800 425h5.200l1.600-2.200 2.200 4 1.400-1.800h5.800" stroke-width="1.100"/>
 <!-- family -->
 <circle cx="322" cy="462.300" r="2.700" stroke-width="1.100"/>
 <circle cx="317.300" cy="466.800" r="2.100" stroke-width="1.100"/>
 <circle cx="326.700" cy="466.800" r="2.100" stroke-width="1.100"/>
 <path d="M314 472.600c.2-2.200 1.500-3.600 3.300-3.600s3.100 1.400 3.300 3.600M323.400 472.600c.2-2.200 1.500-3.600 3.300-3.600s3.100 1.400 3.300 3.600M319.300 467c.5-1.200 1.500-1.900 2.700-1.900s2.200.7 2.700 1.900" stroke-width="1.100"/>
 <!-- gear (settings) -->
 <g transform="translate(322.1 944.9) scale(.88)" stroke-width="1.250">
  <circle r="2.600"/>
  <path d="M-1.300-7.600h2.600l.5 2.100 1.600.7 1.900-1.200 1.800 1.800-1.200 1.900.7 1.600 2.100.5v2.600l-2.100.5-.7 1.600 1.200 1.900-1.800 1.800-1.900-1.200-1.600.7-.5 2.100h-2.600l-.5-2.100-1.600-.7-1.900 1.200-1.800-1.800 1.200-1.900-.7-1.600-2.100-.5v-2.600l2.100-.5.700-1.600-1.200-1.900 1.800-1.800 1.900 1.200 1.600-.7z"/>
 </g>
 <!-- big shield -->
 <path d="M673.800 100.700c-3.600 2.200-6.600 3.500-11 3.600v6c0 6.800 4.600 10.800 11 13.900 6.400-3.100 11-7.100 11-13.900v-6c-4.400-.1-7.400-1.400-11-3.600z" stroke-width="1.700" stroke-linejoin="round"/>
 <!-- history + red x -->
 <path d="M663.5 222.1a8.7 8.7 0 1 1-.6 6.5" stroke-width="1.3"/>
 <path d="M662.300 218.800l.3 5.200 4.800-1.400z" fill="#000" stroke="none"/>
 <path d="M670.500 221.300v5.400l2.700 2.700" stroke-width="1.300"/>
 <circle cx="675.900" cy="231" r="4.100" fill="#c4262e" stroke="none"/>
 <path d="M674.100 229.200l3.600 3.600M677.700 229.200l-3.600 3.600" stroke="#fff" stroke-width="1.200"/>
 <!-- gears + green check -->
 <g transform="translate(666.100 372.400)"><circle r="2.700" stroke-width="1.100"/><g stroke-width="1.450"><path d="M0-3v-1.700" transform="rotate(0)"/><path d="M0-3v-1.700" transform="rotate(45)"/><path d="M0-3v-1.700" transform="rotate(90)"/><path d="M0-3v-1.700" transform="rotate(135)"/><path d="M0-3v-1.700" transform="rotate(180)"/><path d="M0-3v-1.700" transform="rotate(225)"/><path d="M0-3v-1.700" transform="rotate(270)"/><path d="M0-3v-1.700" transform="rotate(315)"/></g></g>
 <g transform="translate(675.600 380)"><circle r="3.500" stroke-width="1.100"/><g stroke-width="1.600"><path d="M0-3.800v-1.800" transform="rotate(0)"/><path d="M0-3.800v-1.800" transform="rotate(45)"/><path d="M0-3.800v-1.800" transform="rotate(225)"/><path d="M0-3.800v-1.800" transform="rotate(270)"/><path d="M0-3.800v-1.800" transform="rotate(315)"/></g></g>
 <circle cx="675.900" cy="380.700" r="4.100" fill="#107c10" stroke="none"/>
 <path d="M673.900 380.800l1.500 1.500 2.700-2.900" stroke="#9ff5a4" stroke-width="1.100"/>
 <!-- refresh + green check -->
 <path d="M662.600 515.600a8.600 8.600 0 0 1 16.200-2" stroke-width="1.300"/>
 <path d="M679.900 510.800v5.100h-5z" fill="#000" stroke="none"/>
 <path d="M663.400 521.800a8.600 8.600 0 0 0 10 4.500" stroke-width="1.300"/>
 <path d="M662.200 525.200v-5h5z" fill="#000" stroke="none"/>
 <circle cx="675.900" cy="522.900" r="4.100" fill="#107c10" stroke="none"/>
 <path d="M673.900 523l1.500 1.500 2.700-2.900" stroke="#9ff5a4" stroke-width="1.100"/>
 <!-- safe + green check -->
 <rect x="662.700" y="680.700" width="16.700" height="15.700" stroke-width="1.200"/>
 <rect x="665.600" y="682.900" width="11.700" height="11.500" rx="1.800" stroke="#444" stroke-width="1"/>
 <path d="M664.800 685.300h1.200M664.800 691.700h1.200" stroke-width="1.400"/>
 <circle cx="671.400" cy="688.600" r="3.100" stroke-width="1.200"/>
 <path d="M671.400 685.600v1.400M671.400 690.200v1.400M668.400 688.600h1.400M673 688.600h1.400" stroke-width="1.200"/>
 <path d="M672 690.500a4.100 4.100 0 0 1 7.400-.5v6.400h-6.200a4.100 4.100 0 0 1-1.200-5.900z" fill="#107c10" stroke="none"/>
 <path d="M673.900 693.100l1.500 1.500 2.700-2.900" stroke="#9ff5a4" stroke-width="1.100"/>
</svg>
<!-- POPUP (taskbar thumbnail preview) -->
<div class="abs" style="left:889px;top:892px;width:134px;height:148px;background:rgba(39,39,39,.79);box-shadow:0 0 10px rgba(0,0,0,.35)"></div>
<div class="abs" style="left:897px;top:924px;width:118px;height:70px;background:#fff"></div>
<div class="abs" style="left:897px;top:994px;width:118px;height:38px;background:#f0f0f0"></div>
<div class="abs" style="left:921px;top:1003px;width:80px;height:20px;background:#e6e6e6;border:1px solid #8a8a8a;box-shadow:inset 0 0 0 1px #fbfbfb, 0 1px 0 #999"></div>
<svg style="left:889px;top:892px" width="134" height="148" viewBox="889 892 134 148">
 <rect x="897" y="902" width="15" height="12" fill="#f4f6f6"/>
 <rect x="898.500" y="904" width="7" height="8.500" fill="#4f9a92"/>
 <rect x="907" y="904" width="3.500" height="8.500" fill="#dfe9e8"/>
 <defs><radialGradient id="rx" cx=".4" cy=".3" r=".8"><stop offset="0" stop-color="#e0555a"/><stop offset=".6" stop-color="#c3161c"/><stop offset="1" stop-color="#8f0d12"/></radialGradient></defs>
 <circle cx="930.500" cy="958.800" r="14" fill="#c9c9c9"/>
 <circle cx="930.500" cy="958.800" r="12.600" fill="url(#rx)"/>
 <path d="M924.500 952.800l12 12M936.500 952.800l-12 12" stroke="#f1e7e4" stroke-width="4.200"/>
</svg>
<!-- TASKBAR -->
<div id="tb"></div>
<div class="abs" style="left:48px;top:1041px;width:344px;height:38px;background:#f2f2f2;border:1px solid #fafafa"></div>
<div class="abs" style="left:48px;top:1079px;width:344px;height:1px;background:#b9bcbe"></div>
<div class="abs" style="left:883px;top:1040px;width:48px;height:40px;background:rgba(255,255,255,.18)"></div>
<div class="abs" style="left:642px;top:1078px;width:40px;height:2px;background:#76b9ed"></div>
<div class="abs" style="left:883px;top:1078px;width:48px;height:2px;background:#76b9ed"></div>
<div class="abs" style="left:936px;top:1078px;width:40px;height:2px;background:#76b9ed"></div>
<div class="abs" style="left:985px;top:1078px;width:40px;height:2px;background:#76b9ed"></div>
<div class="abs" style="left:1915px;top:1040px;width:1px;height:40px;background:#5a6270"></div>
<svg style="left:0;top:1040px" width="1920" height="40" viewBox="0 1040 1920 40" fill="none">
 <!-- start -->
 <path d="M16 1054.200l6.400-.9v6.300H16zM23.300 1053.200l8.800-1.300v7.700h-8.800zM16 1060.500h6.400v6.300l-6.400-.9zM23.300 1060.500h8.800v7.700l-8.800-1.300z" fill="#fff"/>
 <!-- search -->
 <circle cx="70.600" cy="1057.300" r="5.300" stroke="#111" stroke-width="1.300"/>
 <path d="M66.800 1061.100l-6.500 6.500" stroke="#111" stroke-width="1.300"/>
 <!-- search illustration -->
 <g>
  <path d="M312 1079c3-11 12-19 24-22l20-2 36-7v31z" fill="#bcd3dd"/>
  <path d="M354 1060l10-8c4-2 8-2 11 0l8 5 9-4v26h-40z" fill="#a3c0d1"/>
  <path d="M329 1062h54l6 5v12h-60z" fill="#e9cb8f"/>
  <path d="M331 1052h6v11h-6zM346 1049h8v14h-8z" fill="#dcbc7e"/>
  <path d="M330.300 1052c0-2.500 1.800-4 3.700-6 1.900 2 3.700 3.500 3.700 6zM344.800 1049c0-3 2.400-4.500 5.200-6.700 2.800 2.200 5.200 3.700 5.200 6.700z" fill="#5d5468"/>
  <g fill="#c48b3e"><rect x="333" y="1067" width="3" height="5" rx="1.500"/><rect x="342" y="1067" width="3" height="5" rx="1.500"/><rect x="351" y="1067" width="3" height="5" rx="1.500"/><rect x="360" y="1066" width="3" height="4" rx="1.500"/><rect x="368" y="1066" width="3" height="4" rx="1.500"/></g>
  <path d="M314 1079l3-7 3 4 3.500-11 3.500 8 3-5 3.500 7 3.500-10 3.500 8 3-5 3.500 6 3.500-8 3.500 7 3-6 3.500 5 3.500-7 3.500 6 3-9 3.500 6 3.500-10 3.500 7 3.500-9 3 8v10z" fill="#154a2e"/>
  <path d="M380 1079v-15m0 0c-2-3-5-4-8-3m8 3c-1-3-3-5-6-6m6 6c0-3 1-5 4-6m-4 6c2-3 5-4 8-3m-8 3c3-1 6 0 8 2" stroke="#1e6b3a" stroke-width="1.600"/>
 </g>
 <!-- cortana -->
 <circle cx="415.800" cy="1060" r="6.900" stroke="#fff" stroke-width="1.900"/>
 <!-- task view -->
 <g stroke="#fff" stroke-width="1.200"><rect x="457.600" y="1056" width="9" height="7.500"/><path d="M456.200 1055v-2.300h11.800v2.300M456.200 1064.500v2.300h11.800v-2.300M470.800 1052.500v3M470.800 1060.500v6.500"/><rect x="469.800" y="1056.800" width="2" height="2" fill="#fff" stroke="none"/></g>
 <!-- explorer -->
 <g>
  <path d="M503.800 1050.500h8l1.500 1.800h12.300v16.500h-21.800z" fill="#f5b92f"/>
  <path d="M503.800 1054h21.800v14.800h-21.800z" fill="#fcd462"/>
  <path d="M508 1061.500h13.500v7.300H508z" fill="#3b97e3"/><path d="M511.800 1065h5.800v3.800h-5.800z" fill="#fcd462"/>
 </g>
 <!-- store -->
 <g>
  <path d="M558.500 1053v-2.200c0-1.200.9-2 2-2h6.200c1.100 0 2 .8 2 2v2.200" stroke="#2f9de4" stroke-width="1.600"/>
  <path d="M551.800 1053h23.600v16.500c0 1.400-1 2.500-2.500 2.500h-18.600c-1.500 0-2.500-1.100-2.500-2.500z" fill="#f3f3f3"/>
  <rect x="559" y="1057.500" width="4.100" height="4.100" fill="#f25022"/><rect x="564" y="1057.500" width="4.100" height="4.100" fill="#7fba00"/><rect x="559" y="1062.500" width="4.100" height="4.100" fill="#00a4ef"/><rect x="564" y="1062.500" width="4.100" height="4.100" fill="#ffb900"/>
 </g>
 <!-- mail -->
 <g>
  <path d="M600.800 1056l11.800-7.500 11.800 7.500v14.800h-23.600z" fill="#1565b8"/>
  <path d="M603 1054.500h19.200v10H603z" fill="#e9eef9"/>
  <path d="M600.800 1056l11.800 8 11.800-8v14.800h-23.600z" fill="#2d97e6"/>
  <path d="M600.800 1070.800l11.800-9.500 11.800 9.500z" fill="#1d7fd4"/>
  <circle cx="625.500" cy="1067.200" r="6.700" fill="#2a3a45" stroke="#e8e8e8" stroke-width="1.100"/>
 </g>
 <!-- spotify -->
 <circle cx="661.900" cy="1059.800" r="11.600" fill="#1fd65f"/>
 <g stroke="#161616" stroke-linecap="round"><path d="M655 1056.200c4.700-1.400 10-.9 14.200 1.300" stroke-width="2.100"/><path d="M655.800 1060.100c3.900-1.100 8.400-.7 11.800 1.200" stroke-width="1.700"/><path d="M656.600 1063.800c3.300-.9 6.700-.6 9.400 1" stroke-width="1.500"/></g>
 <!-- edge -->
 <g transform="translate(699 1047.600) scale(.5)">
  <defs><linearGradient id="te1" x1="0" y1="0" x2="1" y2="0"><stop offset="0" stop-color="#35a9e4"/><stop offset=".55" stop-color="#3cc3c8"/><stop offset="1" stop-color="#7ee04a"/></linearGradient><linearGradient id="te2" x1="0" y1="0" x2="0" y2="1"><stop offset="0" stop-color="#1f7fd0"/><stop offset="1" stop-color="#154a96"/></linearGradient></defs>
  <path d="M.8 22.500C2 9.500 12 .5 24.500.5 38 .5 48 10.500 48 22c0 8.500-6 12.500-12.500 12.500-5 0-7.500-2.200-7.500-4.300 0-2.200 2.200-2.700 2.200-6.200 0-5.200-5-10.200-12.200-10.200C9.500 13.800 2 19 .8 22.500z" fill="url(#te1)"/>
  <path d="M.8 22.500C-.5 32 5 42 14 46c9 3.500 20 1.500 26.500-5 1.500-1.800.6-3-1.200-2-5.500 3-13.300 2.500-18.300-2.500-4.800-4.800-4.800-11.500-1-16C13 18 5 18.500.8 22.500z" fill="url(#te2)"/>
 </g>
 <!-- brave -->
 <g transform="translate(748 1047.800) scale(.5)">
  <path d="M24 .8l7.200.4 3.800 4 5-.8 4.200 5.600-1.600 4 1.600 5L40 33c-2 5-7 9-16 14.800C15 42 10 38 8 33L3.800 19l1.600-5-1.600-4L8 4.400l5 .8 3.800-4z" fill="#fb4a26"/>
  <path d="M10 14l6.500-3.300L24 12l7.500-1.300L38 14l-2.700 7.500 1.400 5.500-6.200 5.500L24 38l-6.500-5.500-6.200-5.500 1.400-5.500z" fill="#fff"/>
  <path d="M14.500 15.500l5 1.500-1.500 2.500zM33.500 15.500l-5 1.500 1.500 2.500zM20 27.500l4 2 4-2-1 4-3 1.500-3-1.500zM22 19l2 7 2-7-2-1z" fill="#fb542b"/>
 </g>
 <!-- reaper -->
 <g transform="translate(796.800 1047.400) scale(.5)">
  <path d="M4.500 22C4 12 12 3.500 23 3.500c9 0 16.500 5 21 14 1 3 .5 6-1 9C38 37 31 43 25 44.500c-3 .8-6 0-8.500-2.500C9.500 36 5 29 4.500 22z" fill="#2f78c4"/>
  <path d="M6 17c1.500-3.500 3.500-6 6.500-8.500L21 15c3 7 6.500 13 6.500 21 0 3-1 6-2.500 8-3 .5-6-.5-8.500-3C10 35 5 26 6 17z" fill="#5fba2a"/>
  <path d="M19 11c7-2.500 16-1 22 4.500 3 3.500 3 8 1 12C38 36 31 42 25.500 44c2-3 3-6 2.500-10-1-8-5-15-9-23z" fill="#cf6350"/>
  <path d="M17.500 10c5-2 12-2.300 17.500 0-5-.5-10 .2-13.500 2 4 6 8.500 14 9 22 .2 4-1 7.500-3.500 10 1-3 1.300-6.500.8-10-1-8-5.500-16-10.300-24z" fill="#fff"/>
 </g>
 <!-- overwatch -->
 <g transform="translate(846.100 1048.500) scale(.5)">
  <circle cx="24" cy="23.400" r="18.900" fill="#2b343b" stroke="#a2a29f" stroke-width="6.200"/>
  <path d="M9.700 10.300A18.900 18.900 0 0 1 38.300 10.300" stroke="#e9e04a" stroke-width="6.200"/>
  <path d="M9.300 32.500L20.800 20.500l1.400-9.800h1.100v17.500L13 37.300zM38.700 32.500L27.200 20.500l-1.400-9.800h-1.100v17.500L35 37.300z" fill="#9a9a98"/>
 </g>
 <!-- security shield -->
 <path d="M906.600 1049.600c-2.500 1.500-5.300 2.300-8.600 2.400v5.500c0 5.800 3.500 9.200 8.600 11.600 5.100-2.400 8.600-5.800 8.600-11.600v-5.500c-3.300-.1-6.100-.9-8.600-2.400z" fill="#fff"/>
 <path d="M906.600 1049v20.500M897.500 1059.300h18.200" stroke="#4a5a64" stroke-width="1.100"/>
 <!-- sunflower thumbnail -->
 <g>
  <rect x="943.800" y="1048.200" width="24.200" height="23.800" fill="#6e641c"/>
  <rect x="943.800" y="1048.200" width="24.200" height="23.800" fill="#c9a116" opacity=".55"/>
  <ellipse cx="956" cy="1052.500" rx="2.600" ry="6" fill="#f4cf25" transform="rotate(0.0 956 1060)"/><ellipse cx="956" cy="1052.500" rx="2.600" ry="6" fill="#e9b90f" transform="rotate(25.7 956 1060)"/><ellipse cx="956" cy="1052.500" rx="2.600" ry="6" fill="#f4cf25" transform="rotate(51.4 956 1060)"/><ellipse cx="956" cy="1052.500" rx="2.600" ry="6" fill="#e9b90f" transform="rotate(77.1 956 1060)"/><ellipse cx="956" cy="1052.500" rx="2.600" ry="6" fill="#f4cf25" transform="rotate(102.8 956 1060)"/><ellipse cx="956" cy="1052.500" rx="2.600" ry="6" fill="#e9b90f" transform="rotate(128.5 956 1060)"/><ellipse cx="956" cy="1052.500" rx="2.600" ry="6" fill="#f4cf25" transform="rotate(154.2 956 1060)"/><ellipse cx="956" cy="1052.500" rx="2.600" ry="6" fill="#e9b90f" transform="rotate(179.9 956 1060)"/><ellipse cx="956" cy="1052.500" rx="2.600" ry="6" fill="#f4cf25" transform="rotate(205.6 956 1060)"/><ellipse cx="956" cy="1052.500" rx="2.600" ry="6" fill="#e9b90f" transform="rotate(231.3 956 1060)"/><ellipse cx="956" cy="1052.500" rx="2.600" ry="6" fill="#f4cf25" transform="rotate(257.0 956 1060)"/><ellipse cx="956" cy="1052.500" rx="2.600" ry="6" fill="#e9b90f" transform="rotate(282.7 956 1060)"/><ellipse cx="956" cy="1052.500" rx="2.600" ry="6" fill="#f4cf25" transform="rotate(308.4 956 1060)"/><ellipse cx="956" cy="1052.500" rx="2.600" ry="6" fill="#e9b90f" transform="rotate(334.1 956 1060)"/>
  <circle cx="954.800" cy="1059.600" r="3.800" fill="#4a2710"/>
  <circle cx="954.800" cy="1059.600" r="5" fill="none" stroke="#a86a12" stroke-width="1.400" opacity=".7"/>
  <rect x="943.800" y="1048.200" width="1" height="23.800" fill="#d9d9d9"/>
 </g>
 <!-- anarchy A -->
 <g stroke="#e0102a" stroke-width="2.200" stroke-linecap="round">
  <circle cx="1004" cy="1060" r="8.500" stroke-width="2"/>
  <path d="M997.500 1070.500l6.500-21 6.500 19M994.500 1064.500l19-5.500"/>
 </g>
 <!-- weather -->
 <g>
  <defs><linearGradient id="cld" x1="0" y1="0" x2="0" y2="1"><stop offset="0" stop-color="#d6e6fa"/><stop offset="1" stop-color="#a9c0ea"/></linearGradient></defs>
  <path d="M1515.200 1049.200c4.500 3.600 4 10-1 12-4 1.500-7.700-.4-9-3.300 3.800 1.700 8.300.2 9.600-3.300.7-1.800.7-3.700.4-5.400z" fill="#f5a524"/>
  <path d="M1512 1069.700a4.400 4.400 0 0 1-.6-8.700 6.200 6.200 0 0 1 11.600-1.800 5.300 5.300 0 0 1 1.600 10.500z" fill="url(#cld)"/>
 </g>
 <!-- tray icons -->
 <g stroke="#fff" stroke-width="1.200">
  <path d="M1678 1063l5.800-5.800 5.800 5.800"/>
  <rect x="1703.5" y="1056.3" width="8.2" height="7.6" rx="1.6"/><path d="M1711.700 1059l2.500-1.500v5.200l-2.500-1.500M1704 1054.300c.8-1.300 2.100-1.900 3.700-1.900s2.900.6 3.700 1.900M1704 1065.900c.8 1.300 2.100 1.900 3.700 1.900s2.900-.6 3.700-1.900"/>
  <rect x="1728.500" y="1054.500" width="11" height="8"/><path d="M1734 1062.500v3.500M1730 1066.500h8"/><rect x="1724.500" y="1053.500" width="4" height="3" fill="#1a2540"/><path d="M1726.500 1056.500v10h2.500"/>
  <path d="M1748.500 1057.500h2.300l3.400-3.200v11.400l-3.400-3.200h-2.300z"/><path d="M1756.300 1057.300a3.600 3.600 0 0 1 0 5.400M1758.500 1055a6.800 6.800 0 0 1 0 10M1760.700 1052.800a9.900 9.900 0 0 1 0 14.400" stroke-width="1"/>
 </g>
 <!-- notification -->
 <path d="M1879 1052.200h16v12.300h-9.500l-3.500 3.200v-3.200h-3z" fill="#fff"/>
 <path d="M1881.500 1055.500h11M1881.500 1058.300h11M1881.500 1061.100h7" stroke="#1a2540" stroke-width="1"/>
 <circle cx="1894.500" cy="1067" r="6.700" fill="#1f2a40" stroke="#8a8f9a" stroke-width="1.100"/>
</svg>
<div class="t" style="left:315.00px;top:51.00px;font-size:12px;color:#000;letter-spacing:-0.093px;">Sigurnost u sustavu Windows</div>
<div class="t" style="left:349.50px;top:178.00px;font-size:14px;color:#000;letter-spacing:-0.516px;">Polazno</div>
<div class="t" style="left:349.50px;top:218.00px;font-size:14px;color:#000;letter-spacing:0.002px;">Zaštita od virusa i prijetnji</div>
<div class="t" style="left:349.50px;top:258.00px;font-size:14px;color:#000;letter-spacing:-0.271px;">Zaštita računa</div>
<div class="t" style="left:349.50px;top:298.00px;font-size:14px;color:#000;letter-spacing:-0.115px;">Vatrozid i mrežna zaštita</div>
<div class="t" style="left:349.50px;top:338.00px;font-size:14px;color:#000;letter-spacing:-0.028px;">Kontrola aplikacija i preglednika</div>
<div class="t" style="left:349.50px;top:378.00px;font-size:14px;color:#000;letter-spacing:-0.141px;">Sigurnost uređaja</div>
<div class="t" style="left:349.50px;top:418.00px;font-size:14px;color:#000;letter-spacing:-0.185px;">Performanse i stanje uređaja</div>
<div class="t" style="left:349.50px;top:458.00px;font-size:14px;color:#000;letter-spacing:0.185px;">Mogućnosti obitelji</div>
<div class="t" style="left:349.50px;top:938.00px;font-size:14px;color:#000;letter-spacing:-0.556px;">Postavke</div>
<div class="t" style="left:699.50px;top:97.40px;font-size:28px;color:#262626;letter-spacing:-0.325px;">Zaštita od virusa i prijetnji</div>
<div class="t" style="left:661.00px;top:146.00px;font-size:15px;color:#333;letter-spacing:-0.091px;">Zaštita od prijetnji za vaš uređaj.</div>
<div class="t" style="left:693.00px;top:215.00px;font-size:20px;color:#000;letter-spacing:-0.053px;">Trenutne prijetnje</div>
<div class="t" style="left:661.00px;top:251.00px;font-size:15px;color:#646464;letter-spacing:-0.113px;">Poduzimanje radnji na prijetnjama...</div>
<div class="t" style="left:692.00px;top:296.00px;font-size:15px;color:#000;letter-spacing:-0.021px;">Nastavite s radom dok poduzimamo radnje.</div>
<div class="t" style="left:692.00px;top:365.00px;font-size:20px;color:#000;letter-spacing:-0.120px;">Postavke zaštite od virusa i prijetnji</div>
<div class="t" style="left:661.00px;top:398.50px;font-size:15px;color:#646464;letter-spacing:0.012px;">Nije potrebna radnja.</div>
<div class="t" style="left:661.00px;top:440.00px;font-size:13.5px;color:#136cbd;letter-spacing:0.115px;">Upravljanje postavkama</div>
<div class="t" style="left:693.00px;top:507.00px;font-size:20px;color:#000;letter-spacing:-0.032px;">Ažuriranja zaštite od virusa i prijetnji</div>
<div class="t" style="left:661.00px;top:541.00px;font-size:15px;color:#646464;letter-spacing:-0.093px;">Obavijest o sigurnosnom stanju je ažurirana.</div>
<div class="t" style="left:661.00px;top:568.50px;font-size:15px;color:#646464;letter-spacing:-0.242px;">Zadnje ažuriranje: 11.11.2022. 19:57</div>
<div class="t" style="left:661.00px;top:610.00px;font-size:13.5px;color:#136cbd;letter-spacing:0.118px;">Provjeri ima li ažuriranja</div>
<div class="t" style="left:693.00px;top:677.00px;font-size:20px;color:#000;letter-spacing:-0.099px;">Zaštita od ucjenjivačkog softvera</div>
<div class="t" style="left:661.00px;top:710.50px;font-size:15px;color:#646464;letter-spacing:0.012px;">Nije potrebna radnja.</div>
<div class="t" style="left:661.00px;top:752.00px;font-size:13.5px;color:#136cbd;letter-spacing:0.202px;">Upravljanje zaštitom od ucjenjivačkog softvera</div>
<div class="t" style="left:1212.60px;top:147.70px;font-size:15px;color:#000;letter-spacing:-0.220px;">Videozapisi zajednice sustava</div>
<div class="t" style="left:1212.60px;top:168.00px;font-size:15px;color:#000;letter-spacing:-0.077px;">Windows</div>
<div class="t" style="left:1213.30px;top:196.50px;font-size:13px;color:#136cbd;letter-spacing:0.265px;">Saznajte više o zaštiti od virusa i</div>
<div class="t" style="left:1213.30px;top:214.60px;font-size:13px;color:#136cbd;letter-spacing:0.614px;">prijetnji</div>
<div class="t" style="left:1212.00px;top:280.60px;font-size:15px;color:#000;letter-spacing:-0.133px;">Imate pitanje?</div>
<div class="t" style="left:1213.00px;top:308.30px;font-size:13px;color:#136cbd;letter-spacing:0.528px;">Zatražite pomoć</div>
<div class="t" style="left:1212.00px;top:374.80px;font-size:15px;color:#000;letter-spacing:-0.086px;">Tko me štiti?</div>
<div class="t" style="left:1213.00px;top:402.20px;font-size:13px;color:#136cbd;letter-spacing:0.368px;">Upravljanje davateljima usluga</div>
<div class="t" style="left:1212.00px;top:468.50px;font-size:15px;color:#000;letter-spacing:-0.028px;">Pridonesite poboljšanju Sigurnosti u</div>
<div class="t" style="left:1212.00px;top:488.60px;font-size:15px;color:#000;letter-spacing:-0.194px;">sustavu Windows</div>
<div class="t" style="left:1213.00px;top:516.50px;font-size:13px;color:#136cbd;letter-spacing:0.421px;">Pošaljite nam povratne informacije</div>
<div class="t" style="left:1212.00px;top:582.40px;font-size:15px;color:#000;letter-spacing:-0.033px;">Promjena postavki privatnosti</div>
<div class="t" style="left:1212.00px;top:614.70px;font-size:15px;color:#333;letter-spacing:-0.092px;">Pregledavajte i mijenjate postavke</div>
<div class="t" style="left:1212.00px;top:634.80px;font-size:15px;color:#333;letter-spacing:-0.128px;">privatnosti za uređaj sa sustavom</div>
<div class="t" style="left:1212.00px;top:655.00px;font-size:15px;color:#333;letter-spacing:-0.087px;">Windows 10.</div>
<div class="t" style="left:1213.00px;top:682.60px;font-size:13px;color:#136cbd;letter-spacing:0.325px;">Postavke zaštite privatnosti</div>
<div class="t" style="left:1213.00px;top:708.20px;font-size:13px;color:#136cbd;letter-spacing:0.504px;">Kontrolna ploča privatnosti</div>
<div class="t" style="left:1213.00px;top:734.50px;font-size:13px;color:#136cbd;letter-spacing:0.370px;">Izjava o zaštiti privatnosti</div>
<div class="t" style="left:88.70px;top:1052.00px;font-size:15px;color:#3d3d3d;letter-spacing:-0.022px;">Upišite ovdje za pretraživanje</div>
<div class="t" style="left:1537.00px;top:1051.50px;font-size:15px;color:#fff;letter-spacing:-1.600px;">8°C</div>
<div class="t" style="left:1567.50px;top:1051.50px;font-size:15px;color:#fff;letter-spacing:-0.423px;">Mostly cloudy</div>
<div class="t" style="left:1774.50px;top:1052.80px;font-size:12px;color:#fff;letter-spacing:-1.600px;">HRV</div>
<div class="t" style="left:1822.50px;top:1044.00px;font-size:12px;color:#fff;letter-spacing:-0.808px;">19:58</div>
<div class="t" style="left:1807.50px;top:1062.00px;font-size:12px;color:#fff;letter-spacing:-0.483px;">11.11.2022.</div>
<div class="t" style="left:623.30px;top:1061.00px;font-size:10.5px;color:#fff;font-weight:bold;">1</div>
<div class="t" style="left:1891.70px;top:1061.00px;font-size:10.5px;color:#fff;">9</div>
<div class="t" style="left:945.50px;top:1006.70px;font-size:11px;color:#111;letter-spacing:-0.306px;">U redu</div>
<div class="t" style="left:953.60px;top:955.30px;font-size:9px;color:#333;">!</div>
<div class="t lb" style="left:3.30px;top:58.60px;font-size:12px;color:#fff;letter-spacing:-0.489px;">Koš za smeće</div>
<div class="t lb" style="left:85.80px;top:58.60px;font-size:12px;color:#fff;letter-spacing:-0.182px;">Overwatch</div>
<div class="t lb" style="left:12.50px;top:159.70px;font-size:12px;color:#fff;letter-spacing:0.214px;">Microsoft</div>
<div class="t lb" style="left:24.60px;top:174.70px;font-size:12px;color:#fff;letter-spacing:-0.877px;">Edge</div>
<div class="t lb" style="left:94.60px;top:159.70px;font-size:12px;color:#fff;letter-spacing:-0.256px;">Discord</div>
<div class="t lb" style="left:23.75px;top:260.80px;font-size:12px;color:#fff;letter-spacing:-0.777px;">Brave</div>
<div class="t lb" style="left:79.60px;top:260.80px;font-size:12px;color:#fff;letter-spacing:-0.061px;">Counterparts</div>
<div class="t lb" style="left:90.80px;top:275.80px;font-size:12px;color:#fff;letter-spacing:-0.180px;">-Tekstovi</div>
<div class="t lb" style="left:16.70px;top:361.90px;font-size:12px;color:#fff;letter-spacing:-0.698px;">GeForce</div>
<div class="t lb" style="left:9.60px;top:376.90px;font-size:12px;color:#fff;letter-spacing:-0.377px;">Experience</div>
<div class="t lb" style="left:106.70px;top:361.90px;font-size:12px;color:#fff;letter-spacing:-1.600px;">CP</div>
<div class="t lb" style="left:19.60px;top:463.00px;font-size:12px;color:#fff;letter-spacing:-0.081px;">Spotify</div>
<div class="t lb" style="left:83.75px;top:463.00px;font-size:12px;color:#fff;letter-spacing:-0.403px;">Survived By</div>
<div class="t lb" style="left:83.75px;top:478.00px;font-size:12px;color:#fff;letter-spacing:0.077px;">Nothing -...</div>
<div class="t lb" style="left:3.75px;top:564.10px;font-size:12px;color:#fff;letter-spacing:-1.026px;">REAPER (x64)</div>
<div class="t lb" style="left:83.30px;top:564.10px;font-size:12px;color:#fff;letter-spacing:-0.361px;">4K YouTube</div>
<div class="t lb" style="left:95.80px;top:579.10px;font-size:12px;color:#fff;letter-spacing:-0.263px;">to MP3</div>
<div class="t lb" style="left:12.50px;top:665.20px;font-size:12px;color:#fff;letter-spacing:-0.670px;">PowerISO</div>
<div class="t lb" style="left:80.40px;top:665.20px;font-size:12px;color:#fff;letter-spacing:-0.368px;">ToneLib-Ba...</div>
<div class="t lb" style="left:9.70px;top:766.30px;font-size:12px;color:#fff;letter-spacing:-0.040px;">New folder</div>
<div class="t lb" style="left:97.70px;top:766.30px;font-size:12px;color:#fff;letter-spacing:-0.734px;">Waves</div>
<div class="t lb" style="left:95.80px;top:781.30px;font-size:12px;color:#fff;letter-spacing:-0.198px;">Central</div>
<div class="t lb" style="left:16.70px;top:867.40px;font-size:12px;color:#fff;letter-spacing:-0.412px;">Ozone 9</div>
<div class="t lb" style="left:83.75px;top:867.40px;font-size:12px;color:#fff;letter-spacing:-0.176px;">ponuda br1</div>
<div class="t lb" style="left:13.75px;top:968.50px;font-size:12px;color:#fff;letter-spacing:-0.173px;">Battle.net</div>
<div class="t lb" style="left:83.75px;top:968.50px;font-size:12px;color:#fff;letter-spacing:-0.082px;">ponuda br2</div>

</body>
</html>
